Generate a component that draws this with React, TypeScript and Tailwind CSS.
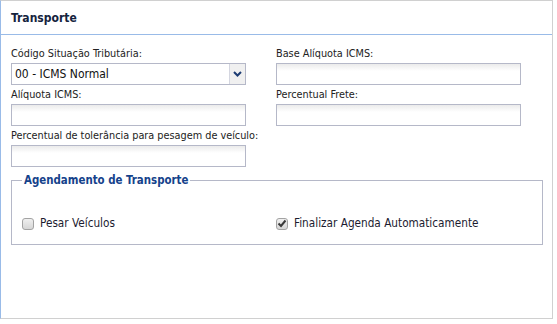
import React from 'react';

const font = { fontFamily: '"DejaVu Sans Condensed", "Liberation Sans", sans-serif' };

function TextInput({ wide = false }: { wide?: boolean }) {
  return (
    <div
      className={`h-[22px] ${wide ? 'w-[245px]' : 'w-[235px]'} border border-[#b5b8c8] bg-white bg-gradient-to-b from-[#ebebeb] to-white to-[35%]`}
    />
  );
}

function Field({ label, wide, children }: { label: string; wide?: boolean; children?: React.ReactNode }) {
  return (
    <div className="flex flex-col">
      <label className="h-[19px] text-[10.8px] leading-[19px] text-[#222] whitespace-nowrap">{label}</label>
      {children ?? <TextInput wide={wide} />}
    </div>
  );
}

function Check({ checked, label }: { checked?: boolean; label: string }) {
  return (
    <label className="flex items-center gap-[6px] text-[11.7px] text-[#1c1c30]">
      <span className="w-[12px] h-[12px] rounded-[3px] border border-[#a3a3a3] bg-gradient-to-b from-[#f0f0f0] to-[#d6d6d6] flex items-center justify-center">
        {checked && (
          <svg width="10" height="9" viewBox="0 0 10 9">
            <path d="M1.5 4.5 L4 7 L8.5 1.5" stroke="#3a3a3a" strokeWidth="2" fill="none" />
          </svg>
        )}
      </span>
      {label}
    </label>
  );
}

export default function App() {
  return (
    <div className="w-[557px] h-[324px] bg-white" style={font}>
      <div className="w-[553px] h-[319px] border border-[#d0d0d0] border-l-[#99bbe8] flex flex-col">
        {/* Header */}
        <div className="h-[34px] border-b border-[#99bbe8] px-[10px] flex items-center">
          <span className="text-[12px] font-bold text-[#15233d]">Transporte</span>
        </div>

        <div className="px-[10px] pt-[9px]">
          <div className="grid grid-cols-[265px_1fr]">
            <Field label="Código Situação Tributária:">
              <div className="h-[22px] w-[235px] border border-[#b5b8c8] bg-white flex">
                <span className="flex-1 pl-[3px] text-[12px] leading-[20px] text-[#111]">00 - ICMS Normal</span>
                <span className="w-[16px] border-l border-[#d4d6e0] bg-[#f0f0f0] flex items-center justify-center">
                  <svg width="9" height="6" viewBox="0 0 9 6">
                    <path d="M1 1 L4.5 4.5 L8 1" stroke="#1d3c73" strokeWidth="2" fill="none" />
                  </svg>
                </span>
              </div>
            </Field>
            <Field label="Base Alíquota ICMS:" wide />
            <Field label="Alíquota ICMS:" />
            <Field label="Percentual Frete:" wide />
            <Field label="Percentual de tolerância para pesagem de veículo:" />
          </div>

          <fieldset className="mt-[5px] w-[532px] h-[73px] border border-[#b5b8c8] px-[10px]">
            <legend className="px-[2px] text-[11.4px] font-bold text-[#15428b]">Agendamento de Transporte</legend>
            <div className="grid grid-cols-[254px_1fr] mt-[26px]">
              <Check label="Pesar Veículos" />
              <Check checked label="Finalizar Agenda Automaticamente" />
            </div>
          </fieldset>
        </div>
      </div>
    </div>
  );
}
